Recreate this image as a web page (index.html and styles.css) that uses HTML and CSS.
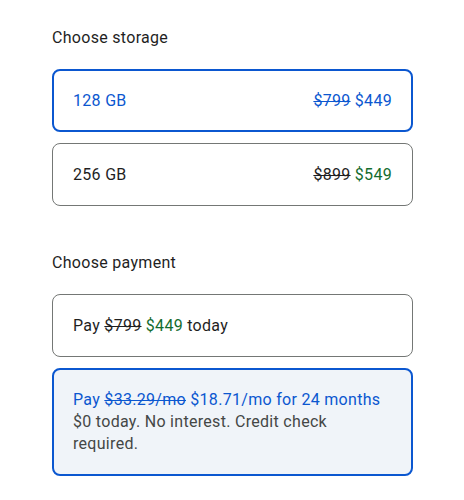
FILE: index.html
```html
<!DOCTYPE html>
<html lang="en">
<head>
<meta charset="utf-8">
<title>Choose options</title>
<link rel="stylesheet" href="styles.css">
</head>
<body>
<main class="page">
  <section class="group">
    <h2 class="heading">Choose storage</h2>
    <div class="options">
      <div class="card selected single">
        <span>128 GB</span>
        <span class="price"><s>$799</s> <span class="now">$449</span></span>
      </div>
      <div class="card single">
        <span>256 GB</span>
        <span class="price"><s>$899</s> <span class="now green">$549</span></span>
      </div>
    </div>
  </section>
  <section class="group second">
    <h2 class="heading">Choose payment</h2>
    <div class="options">
      <div class="card single">
        <span>Pay <s>$799</s> <span class="green">$449</span> today</span>
      </div>
      <div class="card selected multi tinted">
        <div class="title">Pay <s>$33.29/mo</s> $18.71/mo for 24 months</div>
        <div class="sub">$0 today. No interest. Credit check required.</div>
      </div>
    </div>
  </section>
</main>
</body>
</html>
```

FILE: styles.css
```css
* { box-sizing: border-box; }
html, body { margin: 0; padding: 0; background: #ffffff; }
body {
  font-family: Roboto, "Noto Sans", Arial, sans-serif;
  font-size: 16px;
  letter-spacing: 0.3px;
  color: #1f1f1f;
  -webkit-font-smoothing: antialiased;
}
.page {
  padding: 26px 51px 0 52px;
}
.group.second { margin-top: 45px; }
.heading {
  margin: 0 0 19px 0;
  font-size: 16px;
  font-weight: 400;
  line-height: 24px;
  color: #1f1f1f;
}
.options {
  display: flex;
  flex-direction: column;
  gap: 11px;
}
.card {
  border: 1px solid #747775;
  border-radius: 8px;
  padding: 20px 20px;
  line-height: 21px;
  display: flex;
  justify-content: space-between;
  align-items: center;
  background: #ffffff;
}
.card.selected {
  border: 2px solid #0b57d0;
  padding: 19px 19px;
  color: #0b57d0;
}
.card.multi {
  display: block;
  line-height: 22px;
}
.card.tinted { background: #f0f4f9; }
.sub { color: #444746; }
.green { color: #146c2e; }
.card.selected .now { color: #0b57d0; }
s { text-decoration-thickness: 1px; }
```
